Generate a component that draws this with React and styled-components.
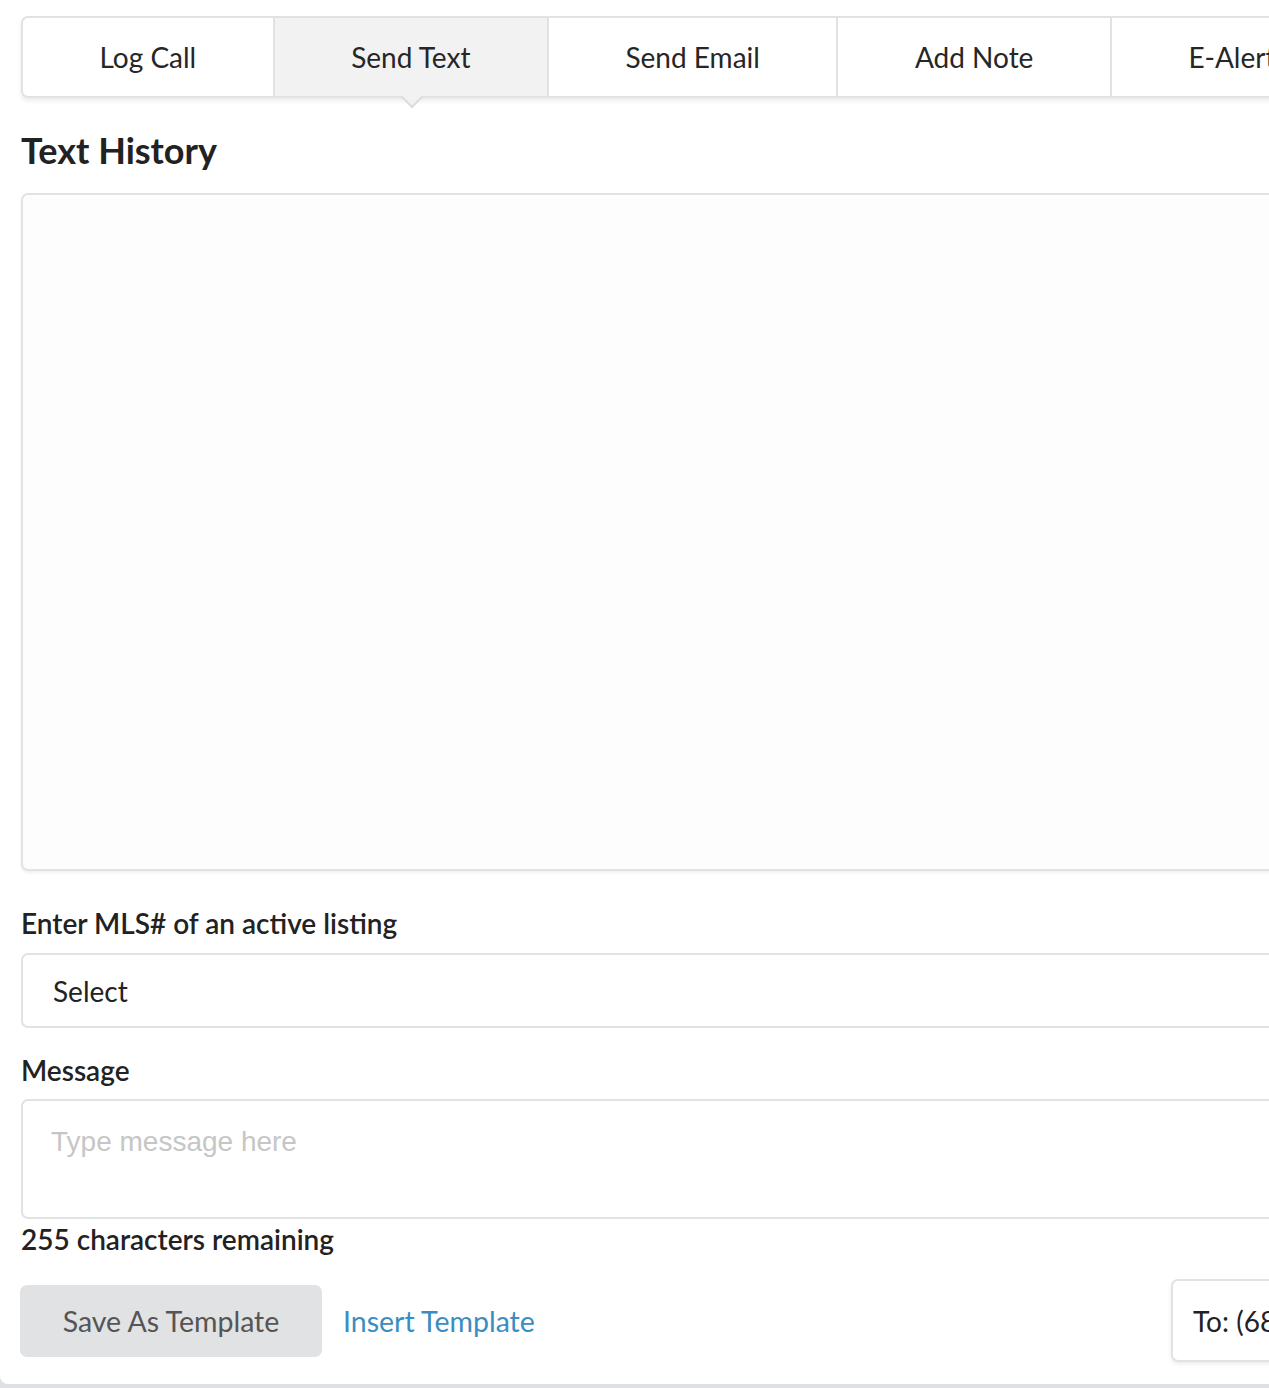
import React from "react";
import styled, { createGlobalStyle } from "styled-components";

const Global = createGlobalStyle`
  html, body { margin: 0; padding: 0; overflow: hidden; background: #dfe0e3; }
  body { font-family: Lato, "Noto Sans", sans-serif; color: #222; }
  * { box-sizing: border-box; }
`;

const Card = styled.div`
  width: 1480px;
  height: 1384px;
  background: #fff;
  border-radius: 0 0 8px 8px;
  padding: 16px 0 0 21px;
  display: flex;
  flex-direction: column;
`;

const Inner = styled.div`
  width: 1400px;
  display: flex;
  flex-direction: column;
`;

const TabBar = styled.div`
  display: flex;
  height: 82px;
  border: 2px solid #e2e2e2;
  border-radius: 7px;
  box-shadow: 0 3px 4px rgba(0, 0, 0, 0.08);
  position: relative;
  z-index: 1;
`;

const Tab = styled.div`
  position: relative;
  display: flex;
  align-items: center;
  justify-content: center;
  padding: 0 76.5px;
  font-size: 28px;
  color: #262626;
  background: ${(p) => (p.$active ? "#f2f2f2" : "transparent")};
  border-left: ${(p) => (p.$first ? "none" : "2px solid #e2e2e2")};
  border-radius: ${(p) => (p.$first ? "6px 0 0 6px" : "0")};
  white-space: nowrap;
  ${(p) =>
    p.$active &&
    `
    &::after {
      content: "";
      position: absolute;
      left: 50%;
      bottom: -9px;
      width: 14px;
      height: 14px;
      margin-left: -7px;
      background: #f2f2f2;
      border-right: 2px solid #dcdcdc;
      border-bottom: 2px solid #dcdcdc;
      transform: rotate(45deg);
    }
  `}
`;

const Heading = styled.h2`
  margin: 31px 0 0;
  font-size: 36px;
  font-weight: 700;
  line-height: 43px;
  color: #222;
`;

const History = styled.div`
  margin-top: 21px;
  height: 678px;
  border: 2px solid #e2e2e2;
  border-radius: 7px;
  background: #fdfdfd;
  box-shadow: 0 2px 3px rgba(0, 0, 0, 0.06);
`;

const Label = styled.div`
  font-size: 28px;
  font-weight: 600;
  line-height: 34px;
  color: #222;
  margin-top: ${(p) => p.$mt}px;
`;

const Select = styled.div`
  margin-top: 13px;
  height: 75px;
  border: 2px solid #e2e2e2;
  border-radius: 7px;
  display: flex;
  align-items: center;
  padding-left: 30px;
  font-size: 28px;
  color: #222;
`;

const TextArea = styled.textarea`
  margin-top: 12px;
  height: 120px;
  border: 2px solid #e2e2e2;
  border-radius: 7px;
  padding: 25px 28px 0;
  font-family: "Liberation Sans", Arial, sans-serif;
  font-size: 28px;
  resize: none;
  outline: none;
  &::placeholder { color: #c6c6c6; }
`;

const Remaining = styled.div`
  font-size: 28px;
  font-weight: 600;
  line-height: 34px;
  margin-top: 3px;
  color: #222;
`;

const Actions = styled.div`
  margin-top: 23px;
  display: flex;
  align-items: center;
`;

const GrayButton = styled.button`
  height: 72px;
  width: 302px;
  margin-left: -1px;
  border: none;
  border-radius: 7px;
  background: #e1e2e4;
  color: #555;
  font-family: Lato, sans-serif;
  font-size: 28.5px;
`;

const LinkButton = styled.a`
  margin-left: 21px;
  font-size: 28.5px;
  color: #3a8dc2;
  text-decoration: none;
`;

const ToBox = styled.div`
  margin-left: auto;
  height: 83px;
  width: 250px;
  border: 2px solid #e2e2e2;
  border-radius: 7px;
  box-shadow: 0 2px 4px rgba(0, 0, 0, 0.08);
  display: flex;
  align-items: center;
  padding-left: 20px;
  font-size: 28px;
  color: #222;
  white-space: nowrap;
  overflow: hidden;
`;

export default function App() {
  return (
    <>
      <Global />
      <Card>
        <Inner>
          <TabBar>
            <Tab $first>Log Call</Tab>
            <Tab $active>Send Text</Tab>
            <Tab>Send Email</Tab>
            <Tab>Add Note</Tab>
            <Tab>E-Alert</Tab>
          </TabBar>
          <Heading>Text History</Heading>
          <History />
          <Label $mt={35}>Enter MLS# of an active listing</Label>
          <Select>Select</Select>
          <Label $mt={25}>Message</Label>
          <TextArea placeholder="Type message here" />
          <Remaining>255 characters remaining</Remaining>
          <Actions>
            <GrayButton>Save As Template</GrayButton>
            <LinkButton href="#">Insert Template</LinkButton>
            <ToBox>To: (686) 555-0123</ToBox>
          </Actions>
        </Inner>
      </Card>
    </>
  );
}
